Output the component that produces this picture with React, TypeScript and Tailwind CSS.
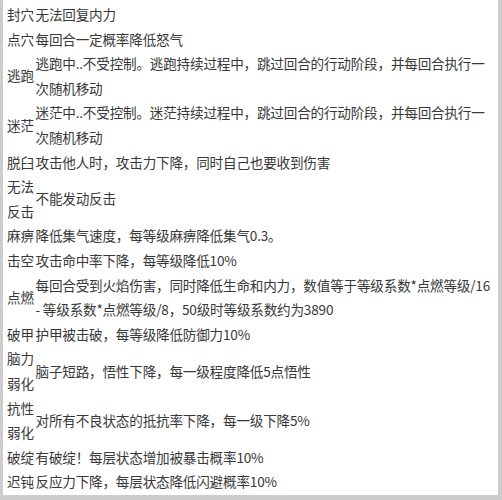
import React from "react";

type Row = { label: string[]; text: string[] };

const rows: Row[] = [
  { label: ["封穴"], text: ["无法回复内力"] },
  { label: ["点穴"], text: ["每回合一定概率降低怒气"] },
  {
    label: ["逃跑"],
    text: [
      "逃跑中..不受控制。逃跑持续过程中，跳过回合的行动阶段，并每回合执行一",
      "次随机移动",
    ],
  },
  {
    label: ["迷茫"],
    text: [
      "迷茫中..不受控制。迷茫持续过程中，跳过回合的行动阶段，并每回合执行一",
      "次随机移动",
    ],
  },
  { label: ["脱臼"], text: ["攻击他人时，攻击力下降，同时自己也要收到伤害"] },
  { label: ["无法", "反击"], text: ["不能发动反击"] },
  { label: ["麻痹"], text: ["降低集气速度，每等级麻痹降低集气0.3。"] },
  { label: ["击空"], text: ["攻击命中率下降，每等级降低10%"] },
  {
    label: ["点燃"],
    text: [
      "每回合受到火焰伤害，同时降低生命和内力，数值等于等级系数*点燃等级/16",
      "- 等级系数*点燃等级/8，50级时等级系数约为3890",
    ],
  },
  { label: ["破甲"], text: ["护甲被击破，每等级降低防御力10%"] },
  { label: ["脑力", "弱化"], text: ["脑子短路，悟性下降，每一级程度降低5点悟性"] },
  { label: ["抗性", "弱化"], text: ["对所有不良状态的抵抗率下降，每一级下降5%"] },
  { label: ["破绽"], text: ["有破绽！每层状态增加被暴击概率10%"] },
  { label: ["迟钝"], text: ["反应力下降，每层状态降低闪避概率10%"] },
];

export default function App() {
  return (
    <div className="w-[502px] h-[500px] bg-[#cdcdcd] pl-[3px] pr-[4px] pb-[5px]">
      <div
        className="h-full bg-white pl-[4px] pt-[2px] text-[13.6px] leading-[24.6px] text-[#383838] overflow-hidden"
        style={{ fontFamily: '"Noto Sans CJK SC", "Microsoft YaHei", sans-serif' }}
      >
        {rows.map((r, i) => (
          <div key={i} className="flex items-center">
            <div className="w-[28.5px] shrink-0">
              {r.label.map((l, j) => (
                <div key={j}>{l}</div>
              ))}
            </div>
            <div className="flex-1 whitespace-nowrap tracking-[-0.2px]">
              {r.text.map((t, j) => (
                <div key={j}>{t}</div>
              ))}
            </div>
          </div>
        ))}
      </div>
    </div>
  );
}
